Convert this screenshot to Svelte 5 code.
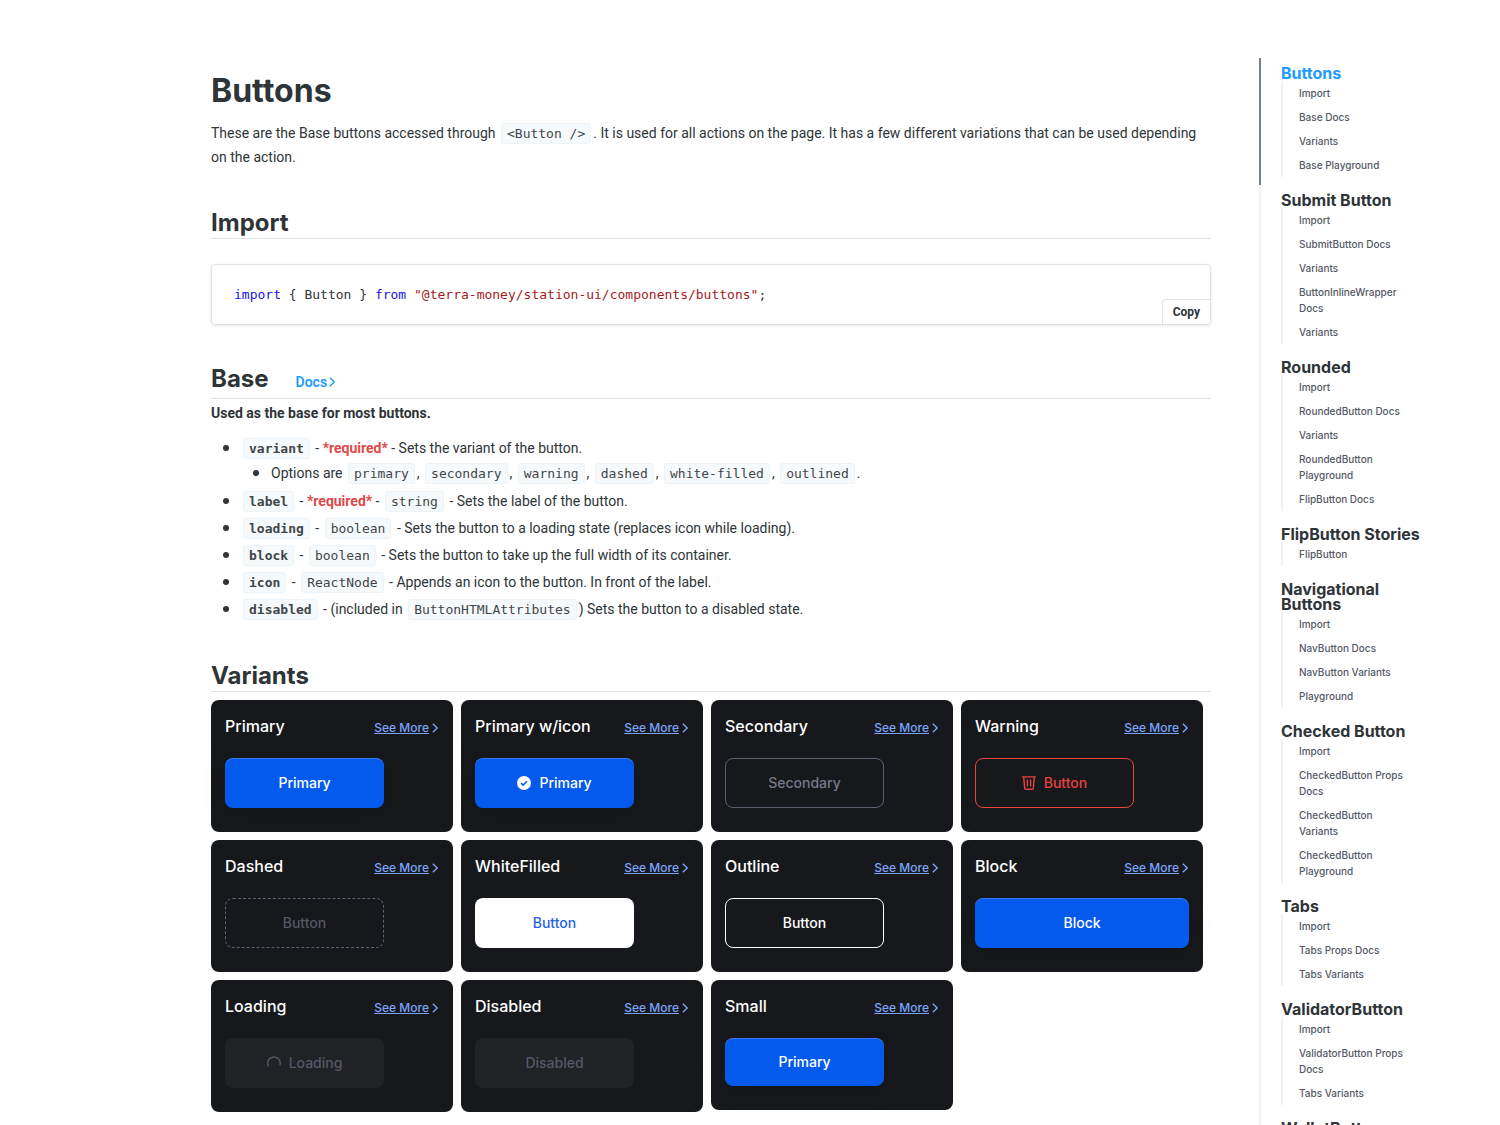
<script lang="ts">
  const options = ['primary', 'secondary', 'warning', 'dashed', 'white-filled', 'outlined'];

  const variants = [
    { title: 'Primary', label: 'Primary', kind: 'primary' },
    { title: 'Primary w/icon', label: 'Primary', kind: 'primary', icon: 'check' },
    { title: 'Secondary', label: 'Secondary', kind: 'secondary' },
    { title: 'Warning', label: 'Button', kind: 'warning', icon: 'trash' },
    { title: 'Dashed', label: 'Button', kind: 'dashed' },
    { title: 'WhiteFilled', label: 'Button', kind: 'white-filled' },
    { title: 'Outline', label: 'Button', kind: 'outlined' },
    { title: 'Block', label: 'Block', kind: 'primary', block: true },
    { title: 'Loading', label: 'Loading', kind: 'primary', icon: 'spinner', disabled: true },
    { title: 'Disabled', label: 'Disabled', kind: 'primary', disabled: true },
    { title: 'Small', label: 'Primary', kind: 'primary', small: true }
  ];

  const toc = [
    { title: 'Buttons', items: ['Import', 'Base Docs', 'Variants', 'Base Playground'] },
    { title: 'Submit Button', items: ['Import', 'SubmitButton Docs', 'Variants', 'ButtonInlineWrapper Docs', 'Variants'] },
    { title: 'Rounded', items: ['Import', 'RoundedButton Docs', 'Variants', 'RoundedButton Playground', 'FlipButton Docs'] },
    { title: 'FlipButton Stories', items: ['FlipButton'] },
    { title: 'Navigational Buttons', items: ['Import', 'NavButton Docs', 'NavButton Variants', 'Playground'] },
    { title: 'Checked Button', items: ['Import', 'CheckedButton Props Docs', 'CheckedButton Variants', 'CheckedButton Playground'] },
    { title: 'Tabs', items: ['Import', 'Tabs Props Docs', 'Tabs Variants'] },
    { title: 'ValidatorButton', items: ['Import', 'ValidatorButton Props Docs', 'Tabs Variants'] },
    { title: 'WalletButton', items: ['Import'] }
  ];

  let active = $state(0);
</script>

{#snippet chevron()}
  <svg class="chevron" viewBox="0 0 6 10" aria-hidden="true"><path d="M0.8 0.8 5.2 5 0.8 9.2" /></svg>
{/snippet}

{#snippet icon(name)}
  <svg class="icon" viewBox="0 0 14 14" aria-hidden="true">
    {#if name === 'check'}
      <circle cx="7" cy="7" r="7" fill="#fff" />
      <path d="M4 7.2 6.1 9.2 10 5.2" fill="none" stroke="#055aee" stroke-width="1.6" />
    {:else if name === 'trash'}
      <g fill="none" stroke="currentColor" stroke-width="1.4">
        <path d="M0 0.9H14M1.7 0.9 2.7 12.2Q2.8 13.3 3.8 13.3H10.2Q11.2 13.3 11.3 12.2L12.3 0.9" />
        <path d="M5.4 3.6V10.4M8.6 3.6V10.4" />
      </g>
    {:else}
      <path d="M1.5 10.5A6.3 6.3 0 1 1 12.9 9.2" fill="none" stroke="currentColor" stroke-width="1.4" />
    {/if}
  </svg>
{/snippet}

<div class="page">
  <main>
    <h1>Buttons</h1>
    <p>
      These are the Base buttons accessed through <code>&lt;Button /&gt;</code>. It is used for all actions on the page.
      It has a few different variations that can be used depending on the action.
    </p>

    <h2>Import</h2>
    <div class="source">
      <pre><span class="keyword">import</span> {'{'} Button {'}'} <span class="keyword">from</span> <span class="string">"@terra-money/station-ui/components/buttons"</span>;</pre>
      <button class="copy">Copy</button>
    </div>

    <div class="heading-row">
      <h2>Base</h2>
      <a href="#docs">Docs{@render chevron()}</a>
    </div>
    <p class="lead"><strong>Used as the base for most buttons.</strong></p>

    <ul class="props">
      <li>
        <code><b>variant</b></code> - <strong class="required">*required*</strong> - Sets the variant of the button.
        <ul>
          <li>Options are {#each options as option, i}<code>{option}</code>{i < options.length - 1 ? ', ' : '.'}{/each}</li>
        </ul>
      </li>
      <li><code><b>label</b></code> - <strong class="required">*required*</strong> - <code>string</code> - Sets the label of the button.</li>
      <li><code><b>loading</b></code> - <code>boolean</code> - Sets the button to a loading state (replaces icon while loading).</li>
      <li><code><b>block</b></code> - <code>boolean</code> - Sets the button to take up the full width of its container.</li>
      <li><code><b>icon</b></code> - <code>ReactNode</code> - Appends an icon to the button. In front of the label.</li>
      <li><code><b>disabled</b></code> - (included in <code>ButtonHTMLAttributes</code>) Sets the button to a disabled state.</li>
    </ul>

    <h2>Variants</h2>
    <div class="grid">
      {#each variants as v}
        <section class="card">
          <header>
            <h3>{v.title}</h3>
            <a href="#more"><span>See More</span>{@render chevron()}</a>
          </header>
          <button class="btn {v.kind}" class:block={v.block} class:small={v.small} disabled={v.disabled}>
            {#if v.icon}{@render icon(v.icon)}{/if}
            {v.label}
          </button>
        </section>
      {/each}
    </div>
  </main>

  <nav aria-label="Contents">
    {#each toc as section, i}
      <div class="toc-section" class:active={i === active}>
        <a class="toc-title" href="#section-{i}" onclick={() => (active = i)}>{section.title}</a>
        <ul>
          {#each section.items as item}
            <li><a href="#section-{i}">{item}</a></li>
          {/each}
        </ul>
      </div>
    {/each}
  </nav>
</div>

<style>
  :global(body) {
    background: #fff;
  }

  .page {
    --heading: Inter, 'Liberation Sans', sans-serif;
    --mono: 'DejaVu Sans Mono', 'Liberation Mono', monospace;
    box-sizing: border-box;
    height: 100vh;
    overflow: hidden;
    display: flex;
    justify-content: center;
    gap: 48px;
    padding-left: 132px;
    color: #2e3438;
    font: 14px/24px Roboto, 'Liberation Sans', sans-serif;
  }

  main {
    flex: 0 1 1000px;
    min-width: 0;
    padding-top: 72px;
  }

  h1, h2, h3, p, pre {
    margin: 0;
  }

  h1 {
    margin-bottom: 11px;
    font: 700 32px/38px var(--heading);
  }

  h2 {
    margin-top: 40px;
    padding-bottom: 2px;
    border-bottom: 1px solid #dde4e8;
    font: 700 24px/27px var(--heading);
  }

  a {
    color: #1e9bfd;
    text-decoration: none;
  }

  code {
    display: inline-block;
    margin: 0 2px;
    padding: 3px 5px;
    border: 1px solid #ecf4f9;
    border-radius: 3px;
    background: #f7fafc;
    color: #3f464b;
    font: 13px/13px var(--mono);
    white-space: nowrap;
  }

  /* Source block */
  .source {
    display: flex;
    justify-content: space-between;
    margin-top: 25px;
    border: 1px solid #dde4e8;
    border-radius: 4px;
    box-shadow: 0 1px 3px rgba(0, 0, 0, 0.1);
  }

  pre {
    padding: 22px;
    font: 13px/15px var(--mono);
  }

  .keyword {
    color: #1414ea;
  }

  .string {
    color: #a31c1c;
  }

  .copy {
    align-self: flex-end;
    padding: 4px 10px;
    border: 0 solid #dde4e8;
    border-width: 1px 0 0 1px;
    border-radius: 4px 0 4px 0;
    background: #fff;
    color: #2e3438;
    font: 700 12px/16px Roboto, 'Liberation Sans', sans-serif;
  }

  .chevron {
    width: 6px;
    height: 10px;
    fill: none;
    stroke: currentColor;
    stroke-width: 1.3;
  }

  /* Base docs */
  .heading-row {
    display: flex;
    align-items: baseline;
    gap: 27px;
    margin-top: 40px;
    padding-bottom: 6px;
    border-bottom: 1px solid #dde4e8;
  }

  .heading-row h2 {
    margin: 0;
    padding: 0;
    border: 0;
  }

  .heading-row a {
    display: flex;
    align-items: center;
    gap: 2px;
    font-weight: 600;
    line-height: 16px;
  }

  .lead {
    margin-top: 2px;
  }

  .props {
    margin: 10px 0 41px;
    padding-left: 30px;
  }

  .props li::marker {
    font-size: 18px;
  }

  .props ul {
    margin: 0 0 3px;
    padding-left: 30px;
    list-style: disc;
  }

  .props > li + li {
    margin-top: 2px;
  }

  .required {
    color: #e0494a;
  }

  /* Variant cards */
  .grid {
    display: grid;
    grid-template-columns: repeat(4, 1fr);
    align-items: start;
    gap: 8px;
    padding: 8px 8px 0 0;
  }

  .card {
    padding: 14px 14px 24px;
    border-radius: 8px;
    background: #17181c;
  }

  .card header {
    display: flex;
    justify-content: space-between;
    align-items: baseline;
    height: 26px;
    margin-bottom: 18px;
    padding-right: 1px;
  }

  h3 {
    color: #fff;
    font: 500 16px/24px var(--heading);
  }

  .card header a {
    display: flex;
    align-items: center;
    gap: 3px;
    color: #7ba5fa;
    font: 500 12px/16px var(--heading);
  }

  .card header span {
    text-decoration: underline;
  }

  .btn {
    display: flex;
    align-items: center;
    justify-content: center;
    gap: 8px;
    width: 159px;
    height: 50px;
    padding: 0;
    border: 1px solid transparent;
    border-radius: 8px;
    background: none;
    font: 500 14px/20px var(--heading);
  }

  .icon {
    width: 14px;
    height: 14px;
  }

  .primary {
    border: 0;
    background: #055aee;
    box-shadow: inset 0 1px 0 rgba(255, 255, 255, 0.2), 0 4px 24px rgba(0, 0, 0, 0.15);
    color: #fff;
  }

  .primary:disabled {
    background: #212226;
    box-shadow: none;
    color: #565765;
  }

  .secondary {
    border-color: #5d5f6d;
    color: #777988;
  }

  .warning {
    border-color: #e8433d;
    color: #e8433d;
  }

  .dashed {
    border: 1px dashed #60626c;
    color: #565765;
  }

  .white-filled {
    background: #fff;
    color: #1f60ea;
  }

  .outlined {
    border-color: #fff;
    color: #fff;
  }

  .block {
    width: 100%;
  }

  .small {
    height: 48px;
  }

  /* Table of contents */
  nav {
    flex: 0 0 162px;
    box-sizing: border-box;
    margin-top: 58px;
    font-family: var(--heading);
  }

  .toc-section {
    padding: 8px 0 8px 20px;
    border-left: 2px solid #eef3f7;
  }

  .toc-section.active {
    border-color: #73808a;
  }

  .toc-title {
    display: block;
    color: #2e3438;
    font-size: 16px;
    font-weight: 700;
    line-height: 15px;
  }

  .active .toc-title {
    color: #1e9bfd;
  }

  nav ul {
    margin: 0;
    padding: 0 12px 0 16px;
    border-left: 2px solid #eef3f7;
    list-style: none;
  }

  nav li {
    padding: 4px 0;
    font-size: 10px;
    font-weight: 500;
    line-height: 16px;
  }

  nav li a {
    display: block;
    color: #545966;
  }
</style>
